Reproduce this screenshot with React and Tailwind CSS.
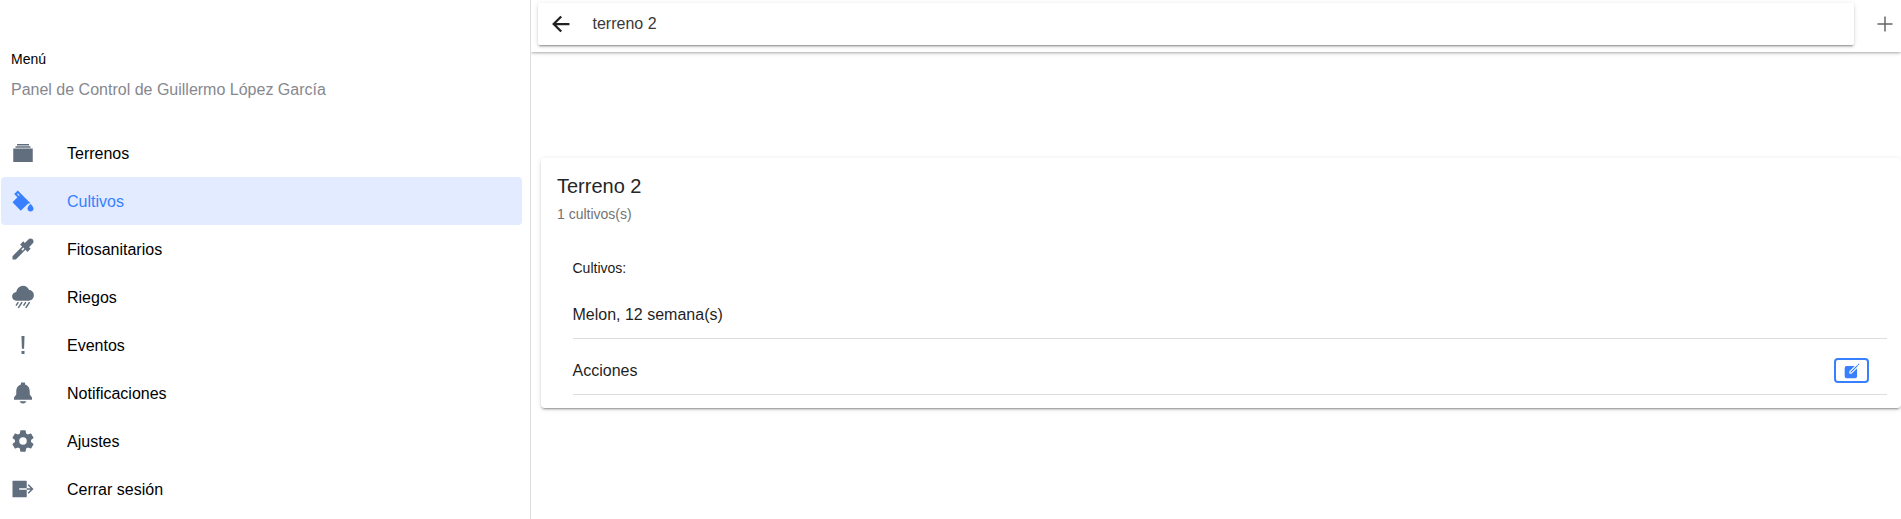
import {
  IoAlbumsSharp,
  IoColorFillSharp,
  IoEyedropSharp,
  IoRainySharp,
  IoAlertSharp,
  IoNotificationsSharp,
  IoSettingsSharp,
  IoExitSharp,
  IoArrowBackSharp,
  IoAddSharp,
  IoCreate,
} from 'react-icons/io5';

const items = [
  { label: 'Terrenos', Icon: IoAlbumsSharp },
  { label: 'Cultivos', Icon: IoColorFillSharp, active: true },
  { label: 'Fitosanitarios', Icon: IoEyedropSharp },
  { label: 'Riegos', Icon: IoRainySharp },
  { label: 'Eventos', Icon: IoAlertSharp },
  { label: 'Notificaciones', Icon: IoNotificationsSharp },
  { label: 'Ajustes', Icon: IoSettingsSharp },
  { label: 'Cerrar sesión', Icon: IoExitSharp },
];

function Sidebar() {
  return (
    <aside className="h-full w-[531px] shrink-0 border-r border-[#dedede] pt-[50px] pl-px pr-2">
      <h1 className="pl-[10px] text-sm leading-[18px] text-black">Menú</h1>
      <p className="mt-3 pl-[10px] text-base leading-5 text-[#86888f]">
        Panel de Control de Guillermo López García
      </p>
      <nav className="mt-[29px]">
        {items.map(({ label, Icon, active }) => (
          <a
            key={label}
            className={
              active
                ? 'flex h-12 items-center rounded bg-[#e2ebff] pl-[10px] text-[#3880ff]'
                : 'flex h-12 items-center rounded pl-[10px] text-black'
            }
          >
            <Icon className={active ? 'size-6 text-[#3880ff]' : 'size-6 text-[#616e7e]'} />
            <span className="ml-8 pt-0.5 text-base">{label}</span>
          </a>
        ))}
      </nav>
    </aside>
  );
}

export default function App() {
  return (
    <div className="flex h-[519px] w-full overflow-hidden bg-white font-['Liberation_Sans',Arial,sans-serif]">
      <Sidebar />
      <main className="flex min-w-0 flex-1 flex-col overflow-hidden">
        <header className="flex h-[52px] shrink-0 items-start pt-[3px] pl-[7px] shadow-[0_2px_4px_-1px_rgba(0,0,0,0.2),0_1px_2px_rgba(0,0,0,0.18)]">
          <div className="flex h-[42px] w-[1316px] items-center rounded-[2px] bg-white pl-[11px] shadow-[0_2px_2px_0_rgba(0,0,0,0.14),0_3px_1px_-2px_rgba(0,0,0,0.2),0_1px_5px_0_rgba(0,0,0,0.12)]">
            <IoArrowBackSharp className="size-6 text-[#212121]" />
            <span className="ml-[19.5px] text-base text-[#3a3a3a]">terreno 2</span>
          </div>
          <IoAddSharp className="mt-[9px] ml-[19px] size-6 shrink-0 text-[#666666]" />
        </header>
        <section className="mt-[106px] ml-[10px] h-[250px] rounded bg-white pt-4 pl-4 shadow-[0_3px_1px_-2px_rgba(0,0,0,0.2),0_2px_2px_0_rgba(0,0,0,0.14),0_1px_5px_0_rgba(0,0,0,0.12)]">
          <h2 className="text-xl leading-6 text-[#262626]">Terreno 2</h2>
          <p className="mt-2 text-sm leading-4 text-[#737373]">1 cultivos(s)</p>
          <div className="mt-[36px] pl-[15.5px] pr-[14px] text-[#1f1f1f]">
            <h3 className="h-[21px] text-sm leading-[21px] text-[#1a1a1a]">Cultivos:</h3>
            <div className="mt-[11px] flex h-[49px] items-center border-b border-[#dedede] pt-0.5 text-base">
              Melon, 12 semana(s)
            </div>
            <div className="flex h-14 items-center justify-between border-b border-[#dedede] pt-2 pr-[18px] text-base">
              <span>Acciones</span>
              <button className="flex h-[25px] w-[35px] items-center justify-center rounded border-2 border-[#3880ff] text-[#3880ff]">
                <IoCreate className="size-[18px] shrink-0" />
              </button>
            </div>
          </div>
        </section>
      </main>
    </div>
  );
}
